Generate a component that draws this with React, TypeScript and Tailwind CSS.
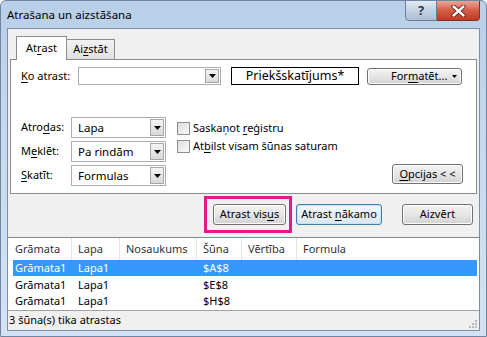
import type { ReactNode } from "react";

const FONT = { fontFamily: '"Noto Sans", "Open Sans", sans-serif' };

function U({ children }: { children: ReactNode }) {
  return <span className="underline underline-offset-2">{children}</span>;
}

function Arrow() {
  return (
    <svg width="7" height="4" viewBox="0 0 7 4">
      <path d="M0 0h7L3.5 4z" fill="#000" />
    </svg>
  );
}

function Combo({ value, className }: { value?: string; className: string }) {
  return (
    <div className={`flex items-stretch border border-[#abadb3] bg-white ${className}`}>
      <div className="flex flex-1 items-center pl-[6px] text-[11.5px] text-black">{value}</div>
      <div className="m-px flex w-[14px] items-center justify-center border border-[#a7a7a7] bg-gradient-to-b from-[#f4f4f4] to-[#d9d9d9]">
        <Arrow />
      </div>
    </div>
  );
}

function Btn({
  children,
  className,
  primary,
}: {
  children: ReactNode;
  className: string;
  primary?: boolean;
}) {
  return (
    <div
      className={`flex items-center rounded-[3px] border text-[11px] text-black ${
        primary
          ? "border-[#3c7fb1] bg-gradient-to-b from-[#f4f9fd] to-[#dbe6ee] shadow-[inset_0_0_0_1px_#c6e3f6]"
          : "border-[#707070] bg-gradient-to-b from-[#f3f3f3] via-[#e6e6e6] to-[#d2d2d2] shadow-[inset_0_0_0_1px_#fcfcfc]"
      } ${className}`}
    >
      {children}
    </div>
  );
}

function Check({ children }: { children: ReactNode }) {
  return (
    <div className="flex h-[18px] items-center gap-[3px]">
      <div className="h-[13px] w-[13px] border border-[#8e8f8f] bg-gradient-to-br from-[#dcdcdc] to-[#fbfbfb]" />
      <span className="text-[11px] text-black">{children}</span>
    </div>
  );
}

const COLS = ["Grāmata", "Lapa", "Nosaukums", "Šūna", "Vērtība", "Formula"];
const ROWS = ["$A$8", "$E$8", "$H$8"];
const GRID = "grid grid-cols-[63px_48px_77px_45px_55px_1fr]";
const GRID_SEL = "grid grid-cols-[59px_48px_77px_45px_55px_1fr]";

export default function App() {
  return (
    <div
      style={FONT}
      className="flex h-[337px] w-[487px] flex-col overflow-hidden rounded-t-[6px] border border-[#6f86a3] bg-gradient-to-b from-[#b9cfe8] via-[#c9dbef] to-[#d3e3f4]"
    >
      {/* title bar */}
      <div className="relative flex h-[27px] shrink-0 items-center pl-[6px]">
        <span className="text-[11.5px] text-black">Atrašana un aizstāšana</span>
        <div className="absolute right-[6px] top-[-1px] flex h-[21px]">
          <div className="flex w-[32px] items-center justify-center rounded-bl-[4px] border border-[#6b7d96] bg-gradient-to-b from-[#e3ebf5] via-[#c4d2e3] to-[#aebfd5] text-[13px] font-bold text-[#2c3a4e]">
            ?
          </div>
          <div className="flex w-[43px] items-center justify-center rounded-br-[4px] border border-l-0 border-[#7a3328] bg-gradient-to-b from-[#e9a797] via-[#d45c45] to-[#c2391f]">
            <svg width="15" height="12" viewBox="0 0 15 12">
              <path d="M2.5 1.5l10 9M12.5 1.5l-10 9" stroke="#5a1a10" strokeWidth="4.2" strokeLinecap="round" />
              <path d="M2.5 1.5l10 9M12.5 1.5l-10 9" stroke="#fff" strokeWidth="2.4" strokeLinecap="round" />
            </svg>
          </div>
        </div>
      </div>

      {/* client area */}
      <div className="mx-[6px] mb-[6px] flex flex-1 flex-col border border-[#7d8fa6] bg-[#f0f0f0]">
        {/* tabs */}
        <div className="flex items-end pl-[8px] pt-[7px]">
          <div className="relative z-10 -mb-px flex h-[24px] w-[51px] items-start justify-center border border-b-0 border-[#898c95] bg-white pt-[3px] text-[11px] text-black">
            At<U>r</U>ast
          </div>
          <div className="flex h-[20px] w-[48px] items-start justify-center border border-l-0 border-b-0 border-[#898c95] bg-gradient-to-b from-[#f2f2f2] to-[#e1e1e1] pt-[1px] text-[11px] text-black">
            Ai<U>z</U>stāt
          </div>
        </div>

        {/* panel */}
        <div className="mx-[2px] flex h-[135px] flex-col border border-[#898c95] bg-white pl-[10px] pr-[13px] pt-[7px]">
          <div className="flex items-center">
            <span className="w-[57px] text-[11px] text-black">
              <U>K</U>o atrast:
            </span>
            <Combo className="h-[18px] w-[143px]" />
            <div className="ml-[10px] flex h-[18px] w-[128px] items-center justify-center border border-black text-[12.5px] text-black">
              Priekšskatījums*
            </div>
            <Btn className="ml-[8px] h-[17px] w-[95px] pl-[23px] pr-[4px]">
              <span>
                For<U>m</U>atēt...
              </span>
              <svg className="ml-auto" width="5" height="3" viewBox="0 0 5 3">
                <path d="M0 0h5L2.5 3z" fill="#000" />
              </svg>
            </Btn>
          </div>

          <div className="mt-[32px] flex flex-1">
            <div className="flex flex-col gap-[3px]">
              {[
                [<>Atro<U>d</U>as:</>, "Lapa"],
                [<>M<U>e</U>klēt:</>, "Pa rindām"],
                [<><U>S</U>katīt:</>, "Formulas"],
              ].map(([label, value], i) => (
                <div key={i} className="flex items-center">
                  <span className="w-[50px] text-[11px] text-black">{label}</span>
                  <Combo className="h-[21px] w-[95px]" value={value as string} />
                </div>
              ))}
            </div>
            <div className="ml-[11px] flex flex-1 flex-col pt-[2px]">
              <Check>
                Saskaņot <U>r</U>eģistru
              </Check>
              <Check>
                At<U>b</U>ilst visam šūnas saturam
              </Check>
              <Btn className="mt-auto mb-[9px] h-[20px] w-[71px] justify-center self-end">
                <span>
                  <U>O</U>pcijas &lt; &lt;
                </span>
              </Btn>
            </div>
          </div>
        </div>

        {/* buttons */}
        <div className="flex justify-end pr-[6px] pt-[10px] pb-[12px]">
          <div className="relative">
            <Btn className="h-[21px] w-[73px] justify-center">
              <span>
                Atrast vis<U>u</U>s
              </span>
            </Btn>
            <div className="pointer-events-none absolute -bottom-[8px] -left-[9px] -right-[6px] -top-[8px] border-[3px] border-[#e3198b]" />
          </div>
          <Btn primary className="ml-[10px] h-[21px] w-[86px] justify-center">
            <span>
              Atrast <U>n</U>ākamo
            </span>
          </Btn>
          <Btn className="ml-[20px] h-[21px] w-[71px] justify-center">
            <span>Aizvērt</span>
          </Btn>
        </div>

        {/* results */}
        <div className="flex h-[73px] flex-col border-t border-[#828790] bg-white pl-px">
          <div className={`${GRID} h-[22px] text-[11px] text-[#333]`}>
            {COLS.map((c, i) => (
              <div
                key={c}
                className={`flex items-center pl-[6px] ${i < COLS.length - 1 ? "border-r border-[#e5e5e5]" : ""}`}
              >
                {c}
              </div>
            ))}
          </div>
          {ROWS.map((cell, i) => (
            <div
              key={cell}
              className={`mr-[2px] h-[17px] text-[11px] ${
                i === 0 ? `${GRID_SEL} ml-[4px] bg-[#3399ff] text-white` : `${GRID} text-black`
              }`}
            >
              <div className={`flex items-center ${i === 0 ? "pl-[2px]" : "pl-[6px]"}`}>Grāmata1</div>
              <div className="flex items-center pl-[6px]">Lapa1</div>
              <div />
              <div className="flex items-center pl-[6px]">{cell}</div>
              <div />
              <div />
            </div>
          ))}
        </div>

        {/* status bar */}
        <div className="relative flex h-[20px] items-center border-t border-[#a0a0a0] bg-[#f0f0f0] pl-px text-[11px] text-black">
          3 šūna(s) tika atrastas
          <svg className="absolute bottom-[2px] right-[2px]" width="10" height="10" viewBox="0 0 10 10">
            {[
              [8, 2],
              [8, 5],
              [5, 5],
              [8, 8],
              [5, 8],
              [2, 8],
            ].map(([x, y]) => (
              <rect key={`${x}-${y}`} x={x} y={y} width="2" height="2" fill="#b8b8b8" />
            ))}
          </svg>
        </div>
      </div>
    </div>
  );
}
